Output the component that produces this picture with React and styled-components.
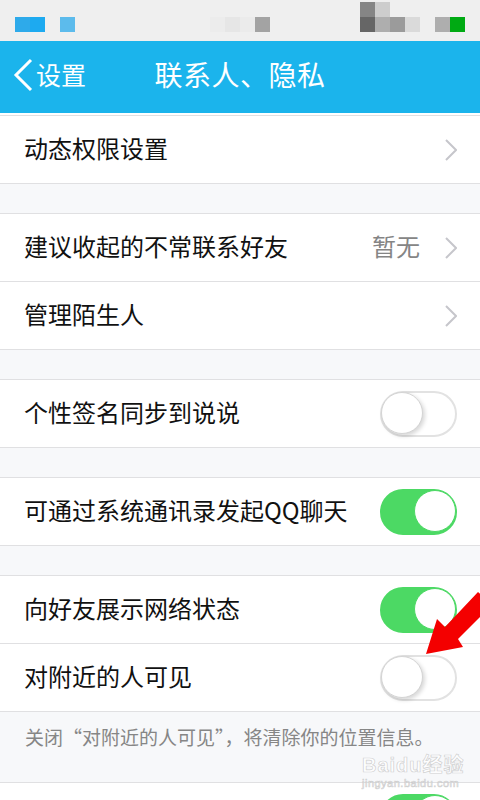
import React from 'react';
import styled, { createGlobalStyle } from 'styled-components';

const Global = createGlobalStyle`
  body {
    margin: 0;
    background: #f7f8fa;
  }
`;

const Page = styled.div`
  position: relative;
  width: 480px;
  height: 800px;
  overflow: hidden;
  background: #f7f8fa;
  font-family: "Noto Sans CJK SC", "Noto Sans", sans-serif;
`;

const StatusBar = styled.div`
  height: 41px;
  box-sizing: border-box;
  padding-top: 2px;
  background: #efefef;
  display: grid;
  grid-template-columns: repeat(32, 15px);
  grid-template-rows: 15px 15px;
`;

const Pixel = styled.div`
  grid-column: ${p => p.$c};
  grid-row: ${p => p.$r};
  background: ${p => p.$color};
`;

const Header = styled.header`
  height: 72px;
  background: #1bb4ec;
  border-bottom: 2px solid #fff;
  display: grid;
  grid-template-columns: 1fr auto 1fr;
  align-items: center;
  color: #fff;
`;

const Back = styled.div`
  display: flex;
  align-items: center;
  padding-left: 13px;
  font-size: 25px;
  gap: 3px;
  margin-top: -4px;
  & span {
    margin-top: -2px;
  }
`;

const Title = styled.h1`
  margin: -6px 0 0;
  font-size: 28px;
  font-weight: 400;
  letter-spacing: 0.5px;
`;

const Group = styled.section`
  background: #fff;
  border-top: 1px solid #e0e0e2;
  border-bottom: 1px solid #e0e0e2;
  margin-top: ${p => p.$gap || 0}px;
`;

const Row = styled.div`
  height: 67px;
  display: flex;
  align-items: center;
  padding: 0 23px 0 24px;
  font-size: 24px;
  color: #111;
  & + & {
    border-top: 1px solid #e0e0e2;
  }
`;

const Label = styled.span`
  flex: 1;
  margin-top: -4px;
`;

const Value = styled.span`
  color: #858585;
  margin-right: 25px;
  margin-top: -4px;
`;

const Toggle = styled.div`
  position: relative;
  width: 77px;
  height: 46px;
  box-sizing: border-box;
  border-radius: 23px;
  background: ${p => (p.$on ? '#4cd964' : '#fff')};
  border: 2px solid ${p => (p.$on ? '#4cd964' : '#e2e2e2')};
  &::after {
    content: '';
    position: absolute;
    top: -1px;
    ${p => (p.$on ? 'right: -1px;' : 'left: -1px;')}
    width: 40px;
    height: 40px;
    border-radius: 50%;
    background: #fff;
    border: 1px solid ${p => (p.$on ? '#4cd964' : '#d4d4d4')};
    box-shadow: ${p => (p.$on ? 'none' : '2px 2px 4px rgba(0,0,0,0.16)')};
  }
`;

const Note = styled.p`
  margin: 0;
  height: 70px;
  box-sizing: border-box;
  padding: 12px 20px 0 25px;
  font-size: 19px;
  line-height: 26px;
  color: #868686;
`;

const Arrow = styled.svg`
  position: absolute;
  left: 420px;
  top: 585px;
`;

const Watermark = styled.div`
  position: absolute;
  left: 362px;
  top: 755px;
  font-family: "Liberation Sans", "Noto Sans CJK SC", sans-serif;
  color: rgba(255, 255, 255, 0.85);
  -webkit-text-stroke: 0.7px rgba(170, 170, 170, 0.55);
  line-height: 1;
  & b {
    font-size: 20px;
    letter-spacing: 1px;
  }
  & small {
    display: block;
    margin-top: 3px;
    font-size: 11px;
    letter-spacing: 0.5px;
  }
`;

const Chevron = () => (
  <svg width="12" height="22" viewBox="0 0 12 22">
    <polyline points="1,1 11,11 1,21" fill="none" stroke="#c6c6cb" strokeWidth="2" />
  </svg>
);

const pixels = [
  [2, 2, '#2eaaea'], [3, 2, '#1daaf0'], [5, 2, '#5cbbec'],
  [15, 2, '#ececec'], [16, 2, '#e6e6e6'], [17, 2, '#ebebeb'], [18, 2, '#a3a3a3'],
  [25, 1, '#858585'], [25, 2, '#666'], [26, 1, '#cdcdcd'], [26, 2, '#aeaeae'],
  [27, 2, '#9b9b9b'], [28, 2, '#dadada'], [30, 2, '#aeaeae'], [31, 2, '#00aa13'],
];

function App() {
  return (
    <Page>
      <Global />
      <StatusBar>
        {pixels.map(([c, r, color]) => (
          <Pixel key={c + '-' + r} $c={c} $r={r} $color={color} />
        ))}
      </StatusBar>
      <Header>
        <Back>
          <svg width="20" height="34" viewBox="0 0 20 34">
            <polyline points="18,2 3,17 18,32" fill="none" stroke="#fff" strokeWidth="3" />
          </svg>
          <span>设置</span>
        </Back>
        <Title>联系人、隐私</Title>
        <div />
      </Header>

      <Group>
        <Row><Label>动态权限设置</Label><Chevron /></Row>
      </Group>

      <Group $gap={29}>
        <Row><Label>建议收起的不常联系好友</Label><Value>暂无</Value><Chevron /></Row>
        <Row><Label>管理陌生人</Label><Chevron /></Row>
      </Group>

      <Group $gap={29}>
        <Row><Label>个性签名同步到说说</Label><Toggle /></Row>
      </Group>

      <Group $gap={29}>
        <Row><Label>可通过系统通讯录发起QQ聊天</Label><Toggle $on /></Row>
      </Group>

      <Group $gap={29}>
        <Row><Label>向好友展示网络状态</Label><Toggle $on /></Row>
        <Row><Label>对附近的人可见</Label><Toggle /></Row>
      </Group>
      <Note>关闭“对附近的人可见”，将清除你的位置信息。</Note>

      <Group>
        <Row><Label>&nbsp;</Label><Toggle $on /></Row>
      </Group>

      <Arrow width="60" height="75" viewBox="420 585 60 75">
        <polygon
          points="426,654 437,619 445,627 478,592 492,605 458,639 463,647"
          fill="#f40000"
        />
      </Arrow>

      <Watermark>
        <b>Baidu经验</b>
        <small>jingyan.baidu.com</small>
      </Watermark>
    </Page>
  );
}

export default App;
